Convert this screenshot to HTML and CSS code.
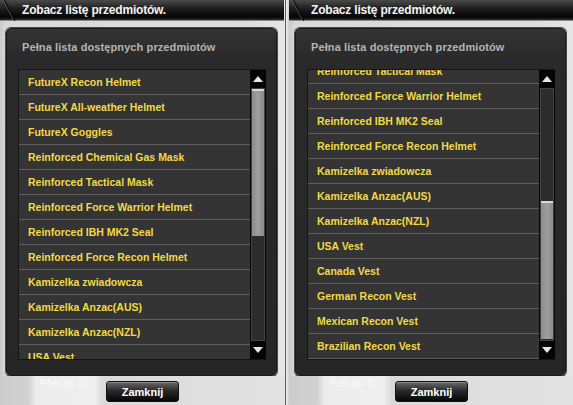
FILE: index.html
```html
<!DOCTYPE html>
<html lang="pl">
<head>
    <meta charset="UTF-8">
    <title>Zobacz listę przedmiotów</title>
    <link rel="stylesheet" href="styles.css">
</head>
<body>

    <div class="desk">
        <section class="shot">
            <header class="titlebar">
                <span class="tab-edge"></span>
                <h1>Zobacz listę przedmiotów.</h1>
            </header>
            <div class="dialog">
                <h2>Pełna lista dostępnych przedmiotów</h2>
                <div class="listbox">
                    <div class="viewport">
                        <ul class="items">
                            <li>FutureX Recon Helmet</li>
                            <li>FutureX All-weather Helmet</li>
                            <li>FutureX Goggles</li>
                            <li>Reinforced Chemical Gas Mask</li>
                            <li>Reinforced Tactical Mask</li>
                            <li>Reinforced Force Warrior Helmet</li>
                            <li>Reinforced IBH MK2 Seal</li>
                            <li>Reinforced Force Recon Helmet</li>
                            <li>Kamizelka zwiadowcza</li>
                            <li>Kamizelka Anzac(AUS)</li>
                            <li>Kamizelka Anzac(NZL)</li>
                            <li>USA Vest</li>
                            <li>Canada Vest</li>
                            <li>German Recon Vest</li>
                            <li>Mexican Recon Vest</li>
                            <li>Brazilian Recon Vest</li>
                        </ul>
                    </div>
                    <div class="scrollbar">
                        <span class="arrow up"></span>
                        <div class="track"><span class="thumb" style="margin-top:0;height:147px"></span></div>
                        <span class="arrow down"></span>
                    </div>
                </div>
            </div>
            <footer class="footer">
                <span class="ghost">Plecak D</span>
                <button class="close-btn">Zamknij</button>
            </footer>
        </section>

        <div class="divider"></div>

        <section class="shot">
            <header class="titlebar">
                <span class="tab-edge"></span>
                <h1>Zobacz listę przedmiotów.</h1>
            </header>
            <div class="dialog">
                <h2>Pełna lista dostępnych przedmiotów</h2>
                <div class="listbox">
                    <div class="viewport">
                        <ul class="items scrolled">
                            <li>FutureX Recon Helmet</li>
                            <li>FutureX All-weather Helmet</li>
                            <li>FutureX Goggles</li>
                            <li>Reinforced Chemical Gas Mask</li>
                            <li>Reinforced Tactical Mask</li>
                            <li>Reinforced Force Warrior Helmet</li>
                            <li>Reinforced IBH MK2 Seal</li>
                            <li>Reinforced Force Recon Helmet</li>
                            <li>Kamizelka zwiadowcza</li>
                            <li>Kamizelka Anzac(AUS)</li>
                            <li>Kamizelka Anzac(NZL)</li>
                            <li>USA Vest</li>
                            <li>Canada Vest</li>
                            <li>German Recon Vest</li>
                            <li>Mexican Recon Vest</li>
                            <li>Brazilian Recon Vest</li>
                        </ul>
                    </div>
                    <div class="scrollbar">
                        <span class="arrow up"></span>
                        <div class="track"><span class="thumb" style="margin-top:112px;height:138px"></span></div>
                        <span class="arrow down"></span>
                    </div>
                </div>
            </div>
            <footer class="footer">
                <span class="ghost">Plecak D</span>
                <button class="close-btn">Zamknij</button>
            </footer>
        </section>
    </div>

</body>
</html>
```

FILE: styles.css
```css
:root {
    --ui-font: "Liberation Sans", Arial, sans-serif;
    --desk-bg: #d4d4d4;
    --dialog-bg: #2a2a2a;
    --row-bg: #343434;
    --row-line: #5e5e5e;
    --item-color: #f2da46;
    --heading-color: #b4b4b4;
}

html, body {
    margin: 0;
    padding: 0;
}

body {
    font-family: var(--ui-font);
    background-color: var(--desk-bg);
    width: 573px;
    height: 405px;
    overflow: hidden;
}

.desk {
    display: flex;
    height: 405px;
}

.shot {
    width: 284px;
    flex: none;
    display: flex;
    flex-direction: column;
    overflow: hidden;
    background: linear-gradient(to right, #c9c9c9 0, #d9d9d9 6px, #dedede 90%, #e6e6e6 100%);
}

.divider {
    width: 5px;
    flex: none;
    background: linear-gradient(to right, #e8e8e8 0, #e8e8e8 1px, #5a5a5a 1px, #5a5a5a 2px, #f0f0f0 2px, #cfcfcf 100%);
}

/* window title strip */
.titlebar {
    position: relative;
    height: 20px;
    flex: none;
    background: linear-gradient(to bottom, #4a4a4a 0, #1c1c1c 45%, #050505 85%, #2a2a2a 100%);
    border-bottom: 1px solid #8a8a8a;
}

.tab-edge {
    position: absolute;
    left: 9px;
    top: -2px;
    width: 1px;
    height: 24px;
    background-color: #000;
    transform: rotate(-27deg);
    box-shadow: -1px 0 0 rgba(120, 120, 120, 0.6);
}

.titlebar h1 {
    margin: 0;
    padding-left: 22px;
    font-size: 12px;
    line-height: 21px;
    font-weight: 700;
    letter-spacing: -0.2px;
    color: #f4f4f4;
}

.dialog {
    margin: 7px 7px 0 6px;
    height: 348px;
    flex: none;
    box-sizing: border-box;
    padding: 0 10px 0 11px;
    background: linear-gradient(to bottom, #333 0, #2a2a2a 30px, #262626 100%);
    border: 1px solid #1a1a1a;
    border-radius: 5px;
    box-shadow: 0 0 0 1px #4a4a4a;
}

.dialog h2 {
    margin: 0;
    padding: 10px 0 0 4px;
    height: 40px;
    box-sizing: border-box;
    font-size: 11px;
    line-height: 16px;
    letter-spacing: 0.1px;
    font-weight: 700;
    color: var(--heading-color);
}

.listbox {
    display: flex;
    height: 289px;
    border: 1px solid #151515;
    border-right: none;
    background-color: var(--row-bg);
}

.viewport {
    flex: 1;
    overflow: hidden;
}

.items {
    list-style: none;
    margin: 0;
    padding: 0;
}

.items.scrolled { margin-top: -111px; }

.items li {
    height: 24px;
    line-height: 24px;
    padding-left: 9px;
    border-bottom: 1px solid var(--row-line);
    font-size: 10.5px;
    font-weight: 700;
    color: var(--item-color);
    white-space: nowrap;
}

.scrollbar {
    width: 16px;
    flex: none;
    display: flex;
    flex-direction: column;
    background-color: #050505;
}

.arrow {
    height: 18px;
    flex: none;
    display: flex;
    align-items: center;
    justify-content: center;
}
.arrow::before {
    content: "";
    border-left: 5px solid transparent;
    border-right: 5px solid transparent;
}
.arrow.up::before { border-bottom: 6px solid #e6e6e6; }
.arrow.down::before { border-top: 6px solid #e6e6e6; }

.track {
    flex: 1;
    margin: 0 1px;
    background-color: #2c2c2c;
    border: 1px solid #444;
    display: flex;
    flex-direction: column;
}

.thumb {
    display: block;
    flex: none;
    background: linear-gradient(to right, #8c8c8c 0, #9e9e9e 50%, #8a8a8a 100%);
    border-top: 2px solid #d8d8d8;
    box-sizing: border-box;
}

.footer {
    flex: 1;
    position: relative;
    display: flex;
    align-items: flex-start;
    padding-top: 5px;
    background: linear-gradient(to right, #cbcbcb 0, #d2d2d2 28px, #ececec 36px, #efefef 95px, #dadada 102px, #e2e2e2 100%);
}

.ghost {
    position: absolute;
    left: 40px;
    top: 1px;
    font-size: 11px;
    line-height: 13px;
    color: #fafafa;
    letter-spacing: 0.3px;
}

.close-btn {
    margin-left: 106px;
    width: 73px;
    height: 21px;
    padding: 0;
    border: 1px solid #111;
    border-radius: 3px;
    background: linear-gradient(to bottom, #6a6a6a 0, #2a2a2a 45%, #060606 100%);
    box-shadow: inset 0 1px 0 #8a8a8a;
    font-family: var(--ui-font);
    font-size: 11px;
    font-weight: 700;
    color: #fff;
}
```
